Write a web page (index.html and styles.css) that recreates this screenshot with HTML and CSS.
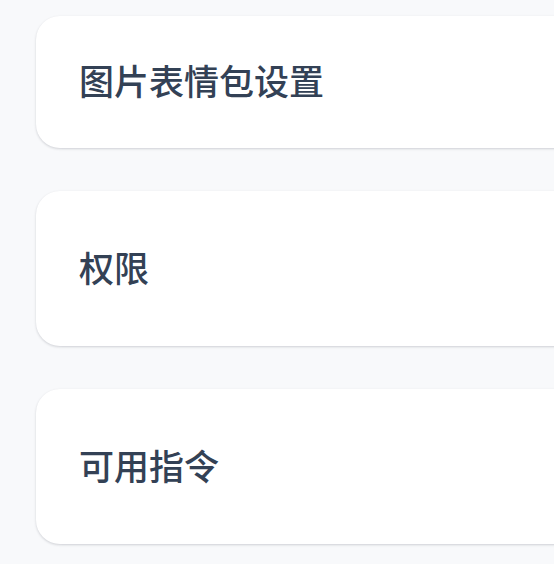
FILE: index.html
```html
<!DOCTYPE html>
<html lang="zh">
<head>
<meta charset="utf-8">
<link rel="stylesheet" href="styles.css">
</head>
<body>
<div class="list">
  <section class="card card-short"><h2 class="title">图片表情包设置</h2></section>
  <section class="card"><h2 class="title">权限</h2></section>
  <section class="card"><h2 class="title">可用指令</h2></section>
</div>
</body>
</html>
```
FILE: styles.css
```css
html, body {
  margin: 0;
  padding: 0;
  background: #f8f9fb;
  overflow: hidden;
  height: 564px;
}
.list {
  display: flex;
  flex-direction: column;
  gap: 43px;
  padding: 16px 0 0 36px;
}
.card {
  width: 620px;
  height: 155px;
  box-sizing: border-box;
  background: #ffffff;
  border-radius: 24px;
  box-shadow: 0 1px 3px rgba(15, 23, 42, 0.12), 0 1px 2px rgba(15, 23, 42, 0.06);
  display: flex;
  align-items: center;
  padding: 0 0 4px 43px;
}
.card-short {
  height: 132px;
}
.title {
  margin: 0;
  font-family: "Noto Sans CJK SC", "Noto Sans", sans-serif;
  font-size: 35px;
  font-weight: 500;
  color: #334155;
  line-height: 1.2;
}
```
